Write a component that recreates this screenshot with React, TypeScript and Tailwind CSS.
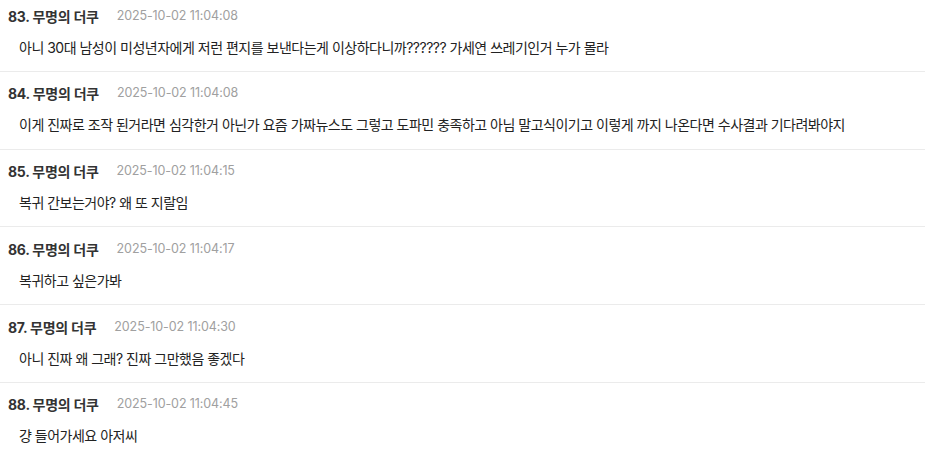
const comments = [
  { no: 83, time: "2025-10-02 11:04:08", text: "아니 30대 남성이 미성년자에게 저런 편지를 보낸다는게 이상하다니까?????? 가세연 쓰레기인거 누가 몰라" },
  { no: 84, time: "2025-10-02 11:04:08", text: "이게 진짜로 조작 된거라면 심각한거 아닌가 요즘 가짜뉴스도 그렇고 도파민 충족하고 아님 말고식이기고 이렇게 까지 나온다면 수사결과 기다려봐야지" },
  { no: 85, time: "2025-10-02 11:04:15", text: "복귀 간보는거야? 왜 또 지랄임" },
  { no: 86, time: "2025-10-02 11:04:17", text: "복귀하고 싶은가봐" },
  { no: 87, time: "2025-10-02 11:04:30", text: "아니 진짜 왜 그래? 진짜 그만했음 좋겠다" },
  { no: 88, time: "2025-10-02 11:04:45", text: "걍 들어가세요 아저씨" },
];

export default function App() {
  return (
    <div
      className="w-[925px] h-[451px] overflow-hidden bg-white"
      style={{ fontFamily: '"Inter", "Noto Sans CJK KR", sans-serif' }}
    >
      <div className="-mt-[6px]">
        {comments.map((c) => (
          <div key={c.no} className="border-b border-[#ebebeb] pt-[13px] pb-[13.75px]">
            <div className="flex items-center h-[18px] pl-[8px]">
              <span className="text-[14px] font-bold text-[#333] tracking-[-0.25px]">
                {c.no}. 무명의 더쿠
              </span>
              <span className="ml-[18px] text-[12.5px] text-[#a0a0a0] tracking-[-0.1px]">{c.time}</span>
            </div>
            <div className="mt-[12px] h-[20px] flex items-center pl-[19px] text-[14px] text-[#222] tracking-[-0.5px]">
              {c.text}
            </div>
          </div>
        ))}
      </div>
    </div>
  );
}
